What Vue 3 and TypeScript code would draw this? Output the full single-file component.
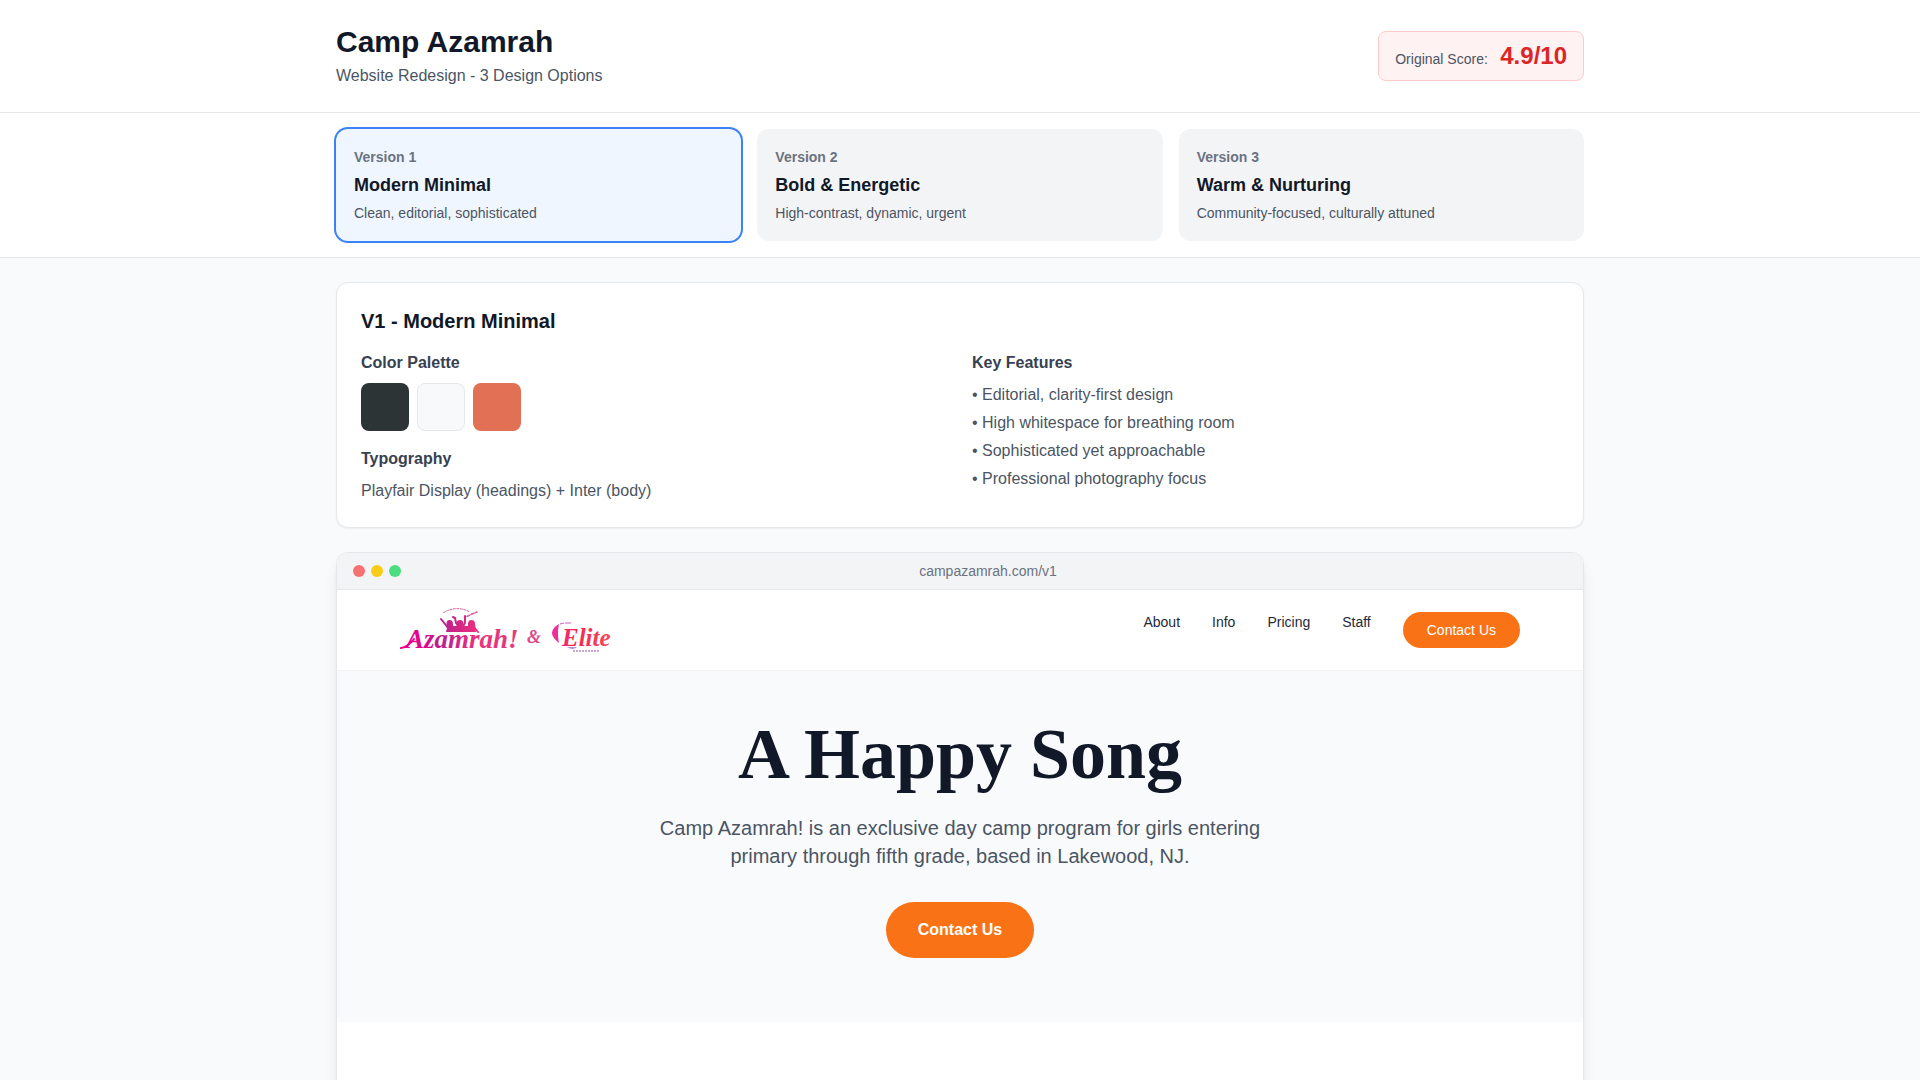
<script setup lang="ts">
import { computed, ref } from 'vue'

interface Swatch {
  color: string
  outlined?: boolean
}

interface Version {
  id: number
  name: string
  tagline: string
  palette: Swatch[]
  typography: string
  features: string[]
}

const versions: Version[] = [
  {
    id: 1,
    name: 'Modern Minimal',
    tagline: 'Clean, editorial, sophisticated',
    palette: [{ color: '#2d3436' }, { color: '#f8f9fa', outlined: true }, { color: '#e17055' }],
    typography: 'Playfair Display (headings) + Inter (body)',
    features: [
      'Editorial, clarity-first design',
      'High whitespace for breathing room',
      'Sophisticated yet approachable',
      'Professional photography focus',
    ],
  },
  {
    id: 2,
    name: 'Bold & Energetic',
    tagline: 'High-contrast, dynamic, urgent',
    palette: [],
    typography: '',
    features: [],
  },
  {
    id: 3,
    name: 'Warm & Nurturing',
    tagline: 'Community-focused, culturally attuned',
    palette: [],
    typography: '',
    features: [],
  },
]

const activeId = ref(1)
const active = computed(() => versions.find((v) => v.id === activeId.value) ?? versions[0])

const links = ['About', 'Info', 'Pricing', 'Staff']
</script>

<template>
  <div class="page">
    <header class="top">
      <div class="container top-row">
        <div>
          <h1 class="title">Camp Azamrah</h1>
          <p class="subtitle">Website Redesign - 3 Design Options</p>
        </div>
        <div class="score">
          <span class="score-label">Original Score:</span>
          {{ ' ' }}
          <span class="score-value">4.9/10</span>
        </div>
      </div>
    </header>

    <div class="tabs">
      <div class="container tab-grid">
        <button
          v-for="v in versions"
          :key="v.id"
          type="button"
          class="tab"
          :class="{ selected: v.id === activeId }"
          @click="activeId = v.id"
        >
          <span class="tab-number">Version {{ v.id }}</span>
          <span class="tab-name">{{ v.name }}</span>
          <span class="tab-tagline">{{ v.tagline }}</span>
        </button>
      </div>
    </div>

    <main class="container main">
      <section class="card">
        <h2 class="card-title">V{{ active.id }} - {{ active.name }}</h2>
        <div class="card-grid">
          <div>
            <h3 class="label">Color Palette</h3>
            <div class="palette">
              <span
                v-for="s in active.palette"
                :key="s.color"
                class="swatch"
                :class="{ outlined: s.outlined }"
                :style="{ backgroundColor: s.color }"
              ></span>
            </div>
            <h3 class="label">Typography</h3>
            <p class="body-text">{{ active.typography }}</p>
          </div>
          <div>
            <h3 class="label">Key Features</h3>
            <ul class="features">
              <li v-for="f in active.features" :key="f">• {{ f }}</li>
            </ul>
          </div>
        </div>
      </section>

      <section class="browser">
        <div class="browser-bar">
          <div class="dots">
            <span class="dot red"></span>
            <span class="dot yellow"></span>
            <span class="dot green"></span>
          </div>
          <span class="url">campazamrah.com/v{{ active.id }}</span>
        </div>

        <nav class="site-nav">
          <a href="#" class="logo" aria-label="Azamrah & Elite">
            <svg width="220" height="48" viewBox="0 0 220 48">
              <defs>
                <linearGradient id="azamrah-ink" gradientUnits="userSpaceOnUse" x1="0" y1="0" x2="118" y2="0">
                  <stop offset="0" stop-color="#ec008c" />
                  <stop offset="0.2" stop-color="#e0058c" />
                  <stop offset="0.36" stop-color="#b9208f" />
                  <stop offset="0.65" stop-color="#ee2f7b" />
                  <stop offset="1" stop-color="#e23a7e" />
                </linearGradient>
                <linearGradient id="elite-ink" gradientUnits="userSpaceOnUse" x1="152" y1="0" x2="212" y2="0">
                  <stop offset="0" stop-color="#ee2a8b" />
                  <stop offset="0.4" stop-color="#f8274f" />
                  <stop offset="1" stop-color="#f5475f" />
                </linearGradient>
              </defs>
              <g fill="none" stroke="#d95a9e" stroke-linecap="round">
                <path d="M43.500 6.500Q57 -1 70 6" stroke-width="1" stroke-dasharray="2 1.500" />
                <path d="M67 10.500L72 8L77 6" stroke-width="1.500" stroke-dasharray="3 1.500" />
              </g>
              <g fill="none" stroke="url(#azamrah-ink)" stroke-width="2" stroke-linecap="round">
                <path d="M41 13L45 18L48 22" />
                <path d="M53 11L55 12L56 17L59 20" />
                <path d="M65 10V17L62 22" />
                <path d="M74 21L78 26" />
              </g>
              <g fill="url(#azamrah-ink)">
                <path d="M46.500 18Q46.500 14 49.500 14Q53 14 53 18V20H56.500V18Q56.500 14 60 14Q63.500 14 63.500 18V20H68V18Q68 14 71.500 14Q75 14 75 18L76 26H46L47 22Z" />
              </g>
              <path
                d="M1 42Q8 41 14 33"
                fill="none"
                stroke="url(#azamrah-ink)"
                stroke-width="2"
                stroke-linecap="round"
              />
              <text class="wordmark" x="6" y="42" fill="url(#azamrah-ink)">Azamrah!</text>
              <text class="ampersand" x="127" y="37">&amp;</text>
              <path d="M159 18Q145 26 159 37Q157 27 159 18Z" fill="#ed2f9a" />
              <path d="M160 18L164 17M165 17H171" stroke="#d65bc0" stroke-width="1" />
              <path d="M167 41Q173 45 177 41Z" fill="#b08be0" />
              <text class="elite" x="162" y="40" fill="url(#elite-ink)">Elite</text>
              <path d="M173 45H199" stroke="#c9a6cf" stroke-width="2" stroke-dasharray="2 1" />
            </svg>
          </a>
          <ul class="nav-links">
            <li v-for="l in links" :key="l"><a href="#" class="nav-link">{{ l }}</a></li>
            <li><a href="#" class="nav-cta">Contact Us</a></li>
          </ul>
        </nav>

        <div class="hero">
          <h2 class="hero-title">A Happy Song</h2>
          <p class="hero-text">
            Camp Azamrah! is an exclusive day camp program for girls entering primary through fifth
            grade, based in Lakewood, NJ.
          </p>
          <button type="button" class="hero-cta">Contact Us</button>
        </div>

        <div class="site-section"></div>
      </section>
    </main>
  </div>
</template>

<style>
body {
  margin: 0;
  background: #f9fafb;
}
</style>

<style scoped>
.page {
  font-family: 'Liberation Sans', Arial, sans-serif;
  font-size: 16px;
  line-height: 24px;
  color: #111827;
}

.page *,
.page {
  box-sizing: border-box;
}

h1,
h2,
h3,
p,
ul {
  margin: 0;
  padding: 0;
}

ul {
  list-style: none;
}

a {
  text-decoration: none;
}

button {
  font-family: inherit;
  cursor: pointer;
}

.container {
  max-width: 1280px;
  margin: 0 auto;
  padding: 0 16px;
}

.top {
  background: #fff;
  border-bottom: 1px solid #e5e7eb;
  padding: 24px 0;
}

.top-row {
  display: flex;
  align-items: center;
  justify-content: space-between;
}

.title {
  font-size: 30px;
  line-height: 36px;
}

.subtitle {
  margin-top: 4px;
  color: #4b5563;
}

.score {
  padding: 8px 16px;
  background: #fef2f2;
  border: 1px solid #fecaca;
  border-radius: 8px;
}

.score-label {
  font-size: 14px;
  line-height: 20px;
  color: #4b5563;
}

.score-value {
  margin-left: 8px;
  font-size: 24px;
  line-height: 32px;
  font-weight: 700;
  color: #dc2626;
}

.tabs {
  background: #fff;
  border-bottom: 1px solid #e5e7eb;
  padding: 16px 0;
}

.tab-grid {
  display: grid;
  grid-template-columns: repeat(3, minmax(0, 1fr));
  gap: 16px;
}

.tab {
  display: flex;
  flex-direction: column;
  gap: 4px;
  padding: 18px;
  border: 0;
  border-radius: 12px;
  background: #f3f4f6;
  text-align: left;
}

.tab.selected {
  background: #eff6ff;
  box-shadow: 0 0 0 2px #3b82f6;
}

.tab-number {
  font-size: 14px;
  line-height: 20px;
  font-weight: 700;
  color: #6b7280;
}

.tab-name {
  font-size: 18px;
  line-height: 28px;
  font-weight: 700;
  color: #111827;
}

.tab-tagline {
  font-size: 14px;
  line-height: 20px;
  color: #4b5563;
}

.main {
  display: flex;
  flex-direction: column;
  gap: 24px;
  padding-top: 24px;
}

.card {
  padding: 24px;
  background: #fff;
  border: 1px solid #e5e7eb;
  border-radius: 12px;
  box-shadow: 0 1px 2px rgba(0, 0, 0, 0.05);
}

.card-title {
  margin-bottom: 16px;
  font-size: 20px;
  line-height: 28px;
}

.card-grid {
  display: grid;
  grid-template-columns: repeat(2, minmax(0, 1fr));
  gap: 24px;
}

.label {
  margin-bottom: 8px;
  font-size: 16px;
  line-height: 24px;
  color: #374151;
}

.palette {
  display: flex;
  gap: 8px;
  margin-bottom: 16px;
}

.swatch {
  width: 48px;
  height: 48px;
  border-radius: 8px;
}

.swatch.outlined {
  border: 1px solid #e5e7eb;
}

.body-text {
  color: #4b5563;
}

.features {
  display: flex;
  flex-direction: column;
  gap: 4px;
  color: #4b5563;
}

.browser {
  overflow: hidden;
  background: #fff;
  border: 1px solid #e5e7eb;
  border-radius: 12px;
  box-shadow: 0 10px 15px -3px rgba(0, 0, 0, 0.1), 0 4px 6px -4px rgba(0, 0, 0, 0.1);
}

.browser-bar {
  display: flex;
  align-items: center;
  gap: 8px;
  padding: 8px 16px;
  background: #f3f4f6;
  border-bottom: 1px solid #e5e7eb;
}

.dots {
  display: flex;
  gap: 6px;
}

.dot {
  width: 12px;
  height: 12px;
  border-radius: 50%;
}

.red {
  background: #f87171;
}

.yellow {
  background: #facc15;
}

.green {
  background: #4ade80;
}

.url {
  flex: 1;
  font-size: 14px;
  line-height: 20px;
  text-align: center;
  color: #6b7280;
}

.site-nav {
  display: flex;
  align-items: center;
  justify-content: space-between;
  padding: 16px 63px;
  border-bottom: 1px solid #f3f4f6;
}

.logo,
.logo svg {
  display: block;
}

.wordmark {
  font: italic 700 27px 'Liberation Serif', serif;
}

.ampersand {
  font: italic 700 18px 'Liberation Serif', serif;
  fill: #dc4a8c;
}

.elite {
  font: italic 700 25px 'Liberation Serif', serif;
}

.nav-links {
  display: flex;
  align-items: flex-start;
  gap: 32px;
  font-size: 14px;
  line-height: 20px;
}

.nav-link {
  display: block;
  color: #1f2937;
}

.nav-cta {
  display: block;
  padding: 8px 24px;
  border-radius: 18px;
  background: #f97316;
  color: #fff;
}

.hero {
  display: flex;
  flex-direction: column;
  align-items: center;
  padding: 47px 24px 64px;
  background: #f9fafb;
  text-align: center;
}

.hero-title {
  margin-bottom: 24px;
  font-family: 'Liberation Serif', serif;
  font-size: 72px;
  line-height: 72px;
}

.hero-text {
  max-width: 672px;
  margin-bottom: 32px;
  font-size: 20px;
  line-height: 28px;
  color: #4b5563;
}

.hero-cta {
  padding: 16px 32px;
  border: 0;
  border-radius: 28px;
  background: #f97316;
  font-size: 16px;
  line-height: 24px;
  font-weight: 700;
  color: #fff;
}

.site-section {
  min-height: 160px;
}
</style>
